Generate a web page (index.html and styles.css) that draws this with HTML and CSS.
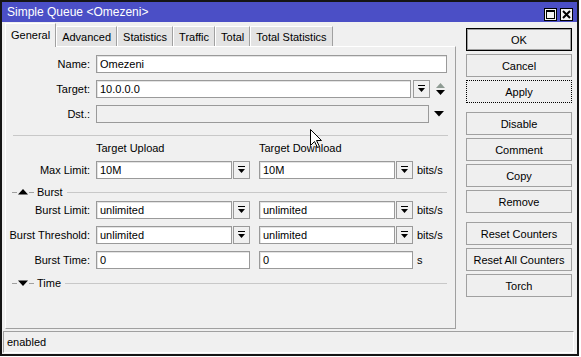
FILE: index.html
```html
<!DOCTYPE html>
<html lang="en">
<head>
    <meta charset="UTF-8">
    <title>Simple Queue &lt;Omezeni&gt;</title>
    <link rel="stylesheet" href="styles.css">
</head>
<body>
    <div class="window">
        <div class="titlebar">
            <span class="title">Simple Queue &lt;Omezeni&gt;</span>
            <div class="title-buttons">
                <span class="tb-btn"><span class="max-glyph"></span></span>
                <span class="tb-btn">
                    <svg width="9" height="9" viewBox="0 0 9 9"><path d="M1 1L8 8M8 1L1 8" stroke="#000" stroke-width="2"/></svg>
                </span>
            </div>
        </div>

        <div class="client">
            <div class="main">
                <div class="tabs-area">
                    <div class="tabs">
                        <span class="tab active">General</span>
                        <span class="tab">Advanced</span>
                        <span class="tab">Statistics</span>
                        <span class="tab">Traffic</span>
                        <span class="tab">Total</span>
                        <span class="tab">Total Statistics</span>
                    </div>

                    <div class="tab-panel">
                        <div class="row">
                            <label class="lbl">Name:</label>
                            <div class="field w-name">Omezeni</div>
                        </div>
                        <div class="row">
                            <label class="lbl">Target:</label>
                            <div class="field w-target">10.0.0.0</div>
                            <span class="dd"><svg width="7" height="8" viewBox="0 0 7 8"><path d="M0 0.5H7" stroke="#000"/><path d="M0 3H7L3.5 7Z" fill="#000"/></svg></span>
                            <svg class="updown" width="9" height="12" viewBox="0 0 9 12"><path d="M0 5H9L4.5 0Z" fill="#8e9b93"/><path d="M0 7H9L4.5 12Z" fill="#000"/></svg>
                        </div>
                        <div class="row">
                            <label class="lbl">Dst.:</label>
                            <div class="field w-dst disabled"></div>
                            <svg class="drop" width="10" height="6" viewBox="0 0 10 6"><path d="M0 0H10L5 5.5Z" fill="#000"/></svg>
                        </div>

                        <div class="separator"></div>

                        <div class="col-heads">
                            <span class="col-head">Target Upload</span>
                            <span class="col-head">Target Download</span>
                        </div>
                        <div class="row row-limit">
                            <label class="lbl">Max Limit:</label>
                            <div class="pair">
                                <div class="field w-half">10M</div>
                                <span class="dd"><svg width="7" height="8" viewBox="0 0 7 8"><path d="M0 0.5H7" stroke="#000"/><path d="M0 3H7L3.5 7Z" fill="#000"/></svg></span>
                            </div>
                            <div class="pair">
                                <div class="field w-half">10M</div>
                                <span class="dd"><svg width="7" height="8" viewBox="0 0 7 8"><path d="M0 0.5H7" stroke="#000"/><path d="M0 3H7L3.5 7Z" fill="#000"/></svg></span>
                            </div>
                            <span class="unit">bits/s</span>
                        </div>

                        <div class="section">
                            <span class="dash"></span>
                            <svg width="10" height="6" viewBox="0 0 10 6"><path d="M0 5.5H10L5 0Z" fill="#000"/></svg>
                            <span class="dash"></span>
                            <span class="section-title">Burst</span>
                            <span class="section-line"></span>
                        </div>

                        <div class="row">
                            <label class="lbl">Burst Limit:</label>
                            <div class="pair">
                                <div class="field w-half">unlimited</div>
                                <span class="dd"><svg width="7" height="8" viewBox="0 0 7 8"><path d="M0 0.5H7" stroke="#000"/><path d="M0 3H7L3.5 7Z" fill="#000"/></svg></span>
                            </div>
                            <div class="pair">
                                <div class="field w-half">unlimited</div>
                                <span class="dd"><svg width="7" height="8" viewBox="0 0 7 8"><path d="M0 0.5H7" stroke="#000"/><path d="M0 3H7L3.5 7Z" fill="#000"/></svg></span>
                            </div>
                            <span class="unit">bits/s</span>
                        </div>
                        <div class="row">
                            <label class="lbl">Burst Threshold:</label>
                            <div class="pair">
                                <div class="field w-half">unlimited</div>
                                <span class="dd"><svg width="7" height="8" viewBox="0 0 7 8"><path d="M0 0.5H7" stroke="#000"/><path d="M0 3H7L3.5 7Z" fill="#000"/></svg></span>
                            </div>
                            <div class="pair">
                                <div class="field w-half">unlimited</div>
                                <span class="dd"><svg width="7" height="8" viewBox="0 0 7 8"><path d="M0 0.5H7" stroke="#000"/><path d="M0 3H7L3.5 7Z" fill="#000"/></svg></span>
                            </div>
                            <span class="unit">bits/s</span>
                        </div>
                        <div class="row">
                            <label class="lbl">Burst Time:</label>
                            <div class="pair">
                                <div class="field w-full">0</div>
                            </div>
                            <div class="pair">
                                <div class="field w-full">0</div>
                            </div>
                            <span class="unit">s</span>
                        </div>

                        <div class="section">
                            <span class="dash"></span>
                            <svg width="10" height="6" viewBox="0 0 10 6"><path d="M0 0.5H10L5 6Z" fill="#000"/></svg>
                            <span class="dash"></span>
                            <span class="section-title">Time</span>
                            <span class="section-line"></span>
                        </div>
                    </div>
                </div>

                <div class="actions">
                    <button class="btn btn-default">OK</button>
                    <button class="btn">Cancel</button>
                    <button class="btn btn-focus">Apply</button>
                    <button class="btn group-start">Disable</button>
                    <button class="btn">Comment</button>
                    <button class="btn">Copy</button>
                    <button class="btn">Remove</button>
                    <button class="btn group-start">Reset Counters</button>
                    <button class="btn">Reset All Counters</button>
                    <button class="btn">Torch</button>
                </div>
            </div>

            <div class="statusbar">enabled</div>
        </div>

        <!-- mouse pointer left in the screenshot -->
        <svg class="cursor" width="12" height="19" viewBox="0 0 12 19">
            <path d="M0.5 0.5V16.5L4.5 12.5L7.5 18.5L9.5 17.5L6.5 11.5H11.5Z" fill="#fff" stroke="#000"/>
        </svg>
    </div>
</body>
</html>
```

FILE: styles.css
```css
* {
    box-sizing: border-box;
}

body {
    margin: 0;
    background-color: #fff;
    font-family: 'Liberation Sans', Arial, sans-serif;
    font-size: 11px;
    color: #000;
}

.window {
    position: relative;
    width: 579px;
    height: 356px;
    border: 2px solid #151515;
    background-color: #f0f0f0;
}

/* title bar */
.titlebar {
    height: 20px;
    background-color: #4b4fc6;
    color: #fff;
    display: flex;
    align-items: center;
    justify-content: space-between;
    padding: 0 4px 0 5px;
}

.title {
    font-size: 12px;
}

.title-buttons {
    display: flex;
    gap: 3px;
    margin-top: 4px;
}

.tb-btn {
    width: 13px;
    height: 13px;
    border: 1px solid #000;
    background-color: #f4f4f4;
    display: flex;
    align-items: center;
    justify-content: center;
}

.max-glyph {
    width: 9px;
    height: 9px;
    border: 1px solid #000;
    border-top-width: 2px;
}

/* client area */
.main {
    display: flex;
    height: 307px;
    padding-top: 1px;
}

.tabs-area {
    width: 451px;
    margin-left: 3px;
    display: flex;
    flex-direction: column;
}

.tabs {
    display: flex;
    align-items: flex-end;
    height: 23px;
}

.tab {
    height: 20px;
    padding: 0 5px;
    line-height: 20px;
    background-color: #e3e3e3;
    border: 1px solid #a0a0a0;
    border-top-color: #fff;
    border-left-color: #fff;
    border-bottom: none;
}

.tab.active {
    height: 24px;
    line-height: 22px;
    margin-bottom: -1px;
    background-color: #f0f0f0;
    position: relative;
    z-index: 1;
}

.tab-panel {
    flex: 1;
    border: 1px solid #a0a0a0;
    border-top-color: #fff;
    border-left-color: #fff;
    padding-top: 8px;
}

/* form rows */
.row {
    display: flex;
    align-items: center;
    height: 18px;
    margin-bottom: 7px;
}

.lbl {
    width: 84px;
    margin-right: 6px;
    text-align: right;
    white-space: nowrap;
}

.field {
    height: 18px;
    line-height: 16px;
    padding-left: 3px;
    background-color: #fff;
    border: 1px solid #9a9a9a;
    box-shadow: inset 1px 1px 0 #e3e3e3;
    white-space: nowrap;
    overflow: hidden;
}

.field.disabled {
    background-color: #f0f0f0;
    box-shadow: none;
}

.w-name { width: 351px; }
.w-target { width: 315px; }
.w-dst { width: 333px; }
.w-half { width: 136px; }
.w-full { width: 154px; }

.dd {
    width: 17px;
    height: 18px;
    margin-left: 1px;
    border: 1px solid #9a9a9a;
    background-color: #f0f0f0;
    display: flex;
    align-items: center;
    justify-content: center;
}

.w-target + .dd {
    margin-left: 2px;
}

.updown {
    margin-left: 6px;
}

.drop {
    margin-left: 5px;
}

.pair {
    display: flex;
    width: 163px;
}

.unit {
    margin-left: -5px;
}

.separator {
    margin: 12px 0 0 7px;
    width: 435px;
    border-top: 1px solid #c8c8c8;
}

.col-heads {
    display: flex;
    padding-left: 90px;
    height: 14px;
    line-height: 14px;
    margin: 5px 0 6px;
}

.col-head {
    width: 163px;
}

.row-limit {
    margin-bottom: 6px;
}

/* collapsible sections */
.section {
    display: flex;
    align-items: center;
    width: 435px;
    height: 14px;
    margin-left: 6px;
    margin-bottom: 2px;
}

.section svg {
    margin: 0 1px;
}

.dash {
    width: 5px;
    border-top: 1px solid #a0a0a0;
}

.section-title {
    margin: 0 4px 0 3px;
}

.section-line {
    flex: 1;
    border-top: 1px solid #c8c8c8;
}

/* buttons */
.actions {
    margin-left: 10px;
    padding-top: 5px;
    display: flex;
    flex-direction: column;
}

.btn {
    width: 106px;
    height: 23px;
    margin: 0 0 3px;
    padding: 0;
    font-family: inherit;
    font-size: 11px;
    color: #000;
    background-color: #efefef;
    border: 1px solid #a0a0a0;
}

.btn-default {
    border-color: #000;
    box-shadow: inset 0 0 0 1px #a0a0a0;
}

.btn-focus {
    border: 1px dotted #000;
}

.group-start {
    margin-top: 6px;
}

/* status bar */
.statusbar {
    margin: 2px 3px 0 1px;
    height: 22px;
    line-height: 20px;
    padding-left: 3px;
    border: 1px solid #fff;
    border-top-color: #a0a0a0;
    border-left-color: #a0a0a0;
}

.cursor {
    position: absolute;
    left: 308px;
    top: 127px;
}
```
